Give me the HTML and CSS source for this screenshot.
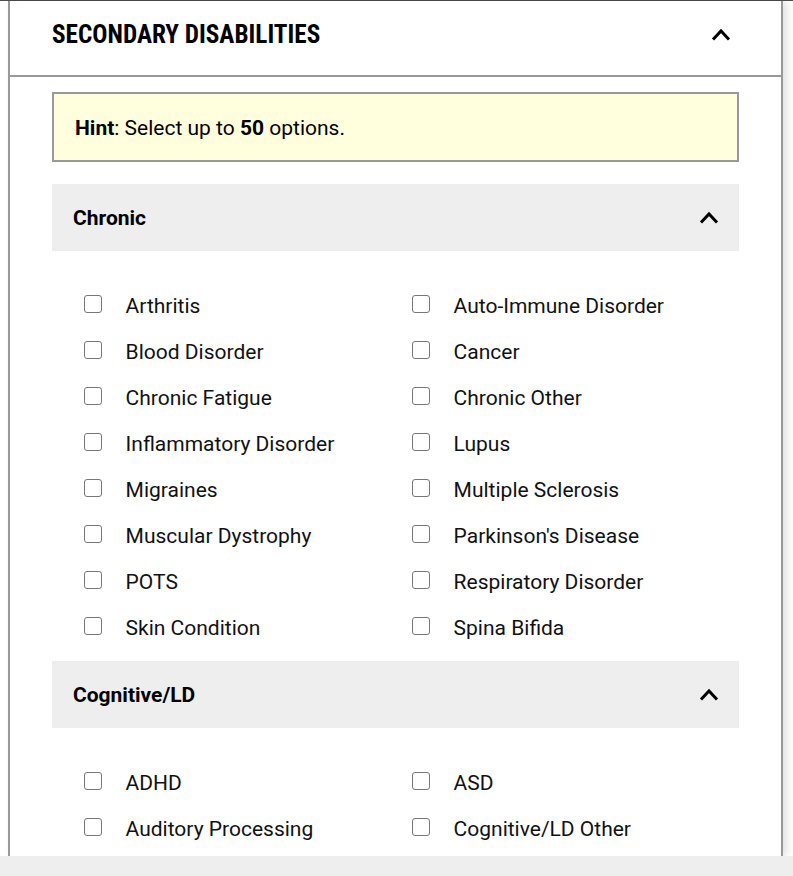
FILE: index.html
```html
<!DOCTYPE html>
<html lang="en">
<head>
<meta charset="utf-8">
<title>Secondary Disabilities</title>
<link rel="stylesheet" href="styles.css">
</head>
<body>
<div class="topline"></div>
<div class="panel">
  <div class="panel-head">
    <h2 class="panel-title">SECONDARY DISABILITIES</h2>
    <svg class="chev" viewBox="0 0 20 13" width="20" height="13"><polyline points="2,11.5 10,3 18,11.5" fill="none" stroke="#000" stroke-width="3"/></svg>
  </div>
  <div class="panel-body">
    <div class="hint"><p class="hint-text"><b>Hint</b>: Select up to <b>50</b> options.</p></div>

    <div class="group-head">
      <span class="group-title">Chronic</span>
      <svg class="chev" viewBox="0 0 20 13" width="20" height="13"><polyline points="2,11.5 10,3 18,11.5" fill="none" stroke="#000" stroke-width="3"/></svg>
    </div>
    <ul class="opts">
      <li><label><input type="checkbox"><span>Arthritis</span></label></li>
      <li><label><input type="checkbox"><span>Auto-Immune Disorder</span></label></li>
      <li><label><input type="checkbox"><span>Blood Disorder</span></label></li>
      <li><label><input type="checkbox"><span>Cancer</span></label></li>
      <li><label><input type="checkbox"><span>Chronic Fatigue</span></label></li>
      <li><label><input type="checkbox"><span>Chronic Other</span></label></li>
      <li><label><input type="checkbox"><span>Inflammatory Disorder</span></label></li>
      <li><label><input type="checkbox"><span>Lupus</span></label></li>
      <li><label><input type="checkbox"><span>Migraines</span></label></li>
      <li><label><input type="checkbox"><span>Multiple Sclerosis</span></label></li>
      <li><label><input type="checkbox"><span>Muscular Dystrophy</span></label></li>
      <li><label><input type="checkbox"><span>Parkinson's Disease</span></label></li>
      <li><label><input type="checkbox"><span>POTS</span></label></li>
      <li><label><input type="checkbox"><span>Respiratory Disorder</span></label></li>
      <li><label><input type="checkbox"><span>Skin Condition</span></label></li>
      <li><label><input type="checkbox"><span>Spina Bifida</span></label></li>
    </ul>

    <div class="group-head">
      <span class="group-title">Cognitive/LD</span>
      <svg class="chev" viewBox="0 0 20 13" width="20" height="13"><polyline points="2,11.5 10,3 18,11.5" fill="none" stroke="#000" stroke-width="3"/></svg>
    </div>
    <ul class="opts">
      <li><label><input type="checkbox"><span>ADHD</span></label></li>
      <li><label><input type="checkbox"><span>ASD</span></label></li>
      <li><label><input type="checkbox"><span>Auditory Processing</span></label></li>
      <li><label><input type="checkbox"><span>Cognitive/LD Other</span></label></li>
    </ul>
  </div>
</div>
<div class="footer-band"></div>
</body>
</html>
```
FILE: styles.css
```css
html, body {
  margin: 0;
  padding: 0;
  background: #fff;
  height: 876px;
  overflow: hidden;
}
body {
  font-family: Roboto, "Liberation Sans", sans-serif;
  color: #000;
  display: flex;
  flex-direction: column;
}
.topline {
  height: 1px;
  background: #4d4d4d;
  flex: none;
}
.panel {
  margin-left: 8px;
  width: 771px;
  height: 855px;
  border-left: 2px solid #999;
  border-right: 2px solid #999;
  box-shadow: 4px 0 8px rgba(0,0,0,0.12);
  overflow: hidden;
  flex: none;
  position: relative;
  background: #fff;
}
.footer-band {
  flex: 1;
  background: #eeeeee;
  position: relative;
  z-index: 2;
}
.panel-head {
  height: 66px;
  padding: 0 50px 8px 42px;
  border-bottom: 2px solid #999;
  display: flex;
  align-items: center;
  justify-content: space-between;
}
.panel-title {
  margin: 0;
  font-family: Roboto, sans-serif;
  font-stretch: 75%;
  font-weight: 700;
  font-size: 25.2px;
  letter-spacing: 0;
}
.chev {
  display: block;
  flex: none;
}
.panel-body {
  padding: 15px 42px 0 42px;
}
.hint {
  height: 66px;
  border: 2px solid #999;
  background: #ffffdd;
  padding-left: 21px;
  display: flex;
  align-items: center;
  margin-bottom: 22px;
}
.hint-text {
  margin: 0;
  font-size: 21px;
  position: relative;
  top: 1px;
}
.hint-text b { font-weight: 700; }
.group-head {
  height: 67px;
  background: #eeeeee;
  padding: 0 20px 0 21px;
  display: flex;
  align-items: center;
  justify-content: space-between;
}
.group-title {
  font-weight: 700;
  font-size: 21px;
}
.opts {
  list-style: none;
  margin: 0;
  padding: 31px 0 11px 32px;
  display: grid;
  grid-template-columns: 328px 1fr;
}
.opts li {
  height: 46px;
  display: flex;
  align-items: center;
}
.opts label {
  display: flex;
  align-items: center;
  font-size: 21px;
  color: #111;
}
.opts label span {
  position: relative;
  top: 1px;
}
.opts input {
  appearance: none;
  -webkit-appearance: none;
  margin: 0 23.6px 0 0;
  width: 18px;
  height: 18px;
  border: 1.5px solid #777;
  border-radius: 3px;
  background: #fff;
  position: relative;
  top: -1px;
}
```
